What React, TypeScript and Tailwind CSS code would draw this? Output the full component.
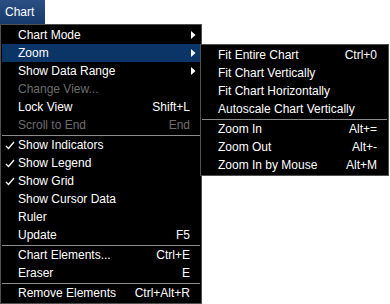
import React from "react";

type Item = {
  label?: string;
  shortcut?: string;
  sub?: boolean;
  disabled?: boolean;
  checked?: boolean;
  active?: boolean;
  sep?: boolean;
};

const mainItems: Item[] = [
  { label: "Chart Mode", sub: true },
  { label: "Zoom", sub: true, active: true },
  { label: "Show Data Range", sub: true },
  { label: "Change View...", disabled: true },
  { label: "Lock View", shortcut: "Shift+L" },
  { label: "Scroll to End", shortcut: "End", disabled: true },
  { sep: true },
  { label: "Show Indicators", checked: true },
  { label: "Show Legend", checked: true },
  { label: "Show Grid", checked: true },
  { label: "Show Cursor Data" },
  { label: "Ruler" },
  { label: "Update", shortcut: "F5" },
  { sep: true },
  { label: "Chart Elements...", shortcut: "Ctrl+E" },
  { label: "Eraser", shortcut: "E" },
  { sep: true },
  { label: "Remove Elements", shortcut: "Ctrl+Alt+R" },
];

const zoomItems: Item[] = [
  { label: "Fit Entire Chart", shortcut: "Ctrl+0" },
  { label: "Fit Chart Vertically" },
  { label: "Fit Chart Horizontally" },
  { label: "Autoscale Chart Vertically" },
  { sep: true },
  { label: "Zoom In", shortcut: "Alt+=" },
  { label: "Zoom Out", shortcut: "Alt+-" },
  { label: "Zoom In by Mouse", shortcut: "Alt+M" },
];

const Check = () => (
  <svg width="10" height="9" viewBox="0 0 10 9" className="absolute left-[3px] top-[5px]">
    <path d="M1 5 L3.5 7.5 L9 1" stroke="#fff" strokeWidth="1.3" fill="none" />
  </svg>
);

const Arrow = () => (
  <svg width="5" height="8" viewBox="0 0 5 8" className="absolute right-[4px] top-[5px]">
    <path d="M0 0 L4.5 4 L0 8 Z" fill="#fff" />
  </svg>
);

const Row = ({ item, textLeft, padRight }: { item: Item; textLeft: string; padRight: string }) => {
  if (item.sep) return <div className="mt-px h-px bg-[#8c8c8c]" />;
  return (
    <div
      className={`relative flex h-[18px] items-center justify-between ${textLeft} ${padRight} ${
        item.active ? "bg-[#0b3566]" : ""
      } ${item.disabled ? "text-[#6e6e6e]" : "text-white"}`}
    >
      {item.checked && <Check />}
      <span>{item.label}</span>
      {item.shortcut && <span>{item.shortcut}</span>}
      {item.sub && <Arrow />}
    </div>
  );
};

const App = () => {
  return (
    <div
      className="relative h-[304px] w-[390px] overflow-hidden bg-white text-[12px] leading-none"
      style={{ fontFamily: '"Liberation Sans", Arial, sans-serif' }}
    >
      <div className="flex h-[24px] w-[45px] items-center bg-gradient-to-b from-[#2b4f83] to-[#173a6b] pl-[5px] text-white">
        Chart
      </div>
      <div className="w-[202px] border border-[#4f4f4f] bg-black p-px">
        {mainItems.map((it, i) => (
          <Row key={i} item={it} textLeft="pl-[16px]" padRight="pr-[10px]" />
        ))}
      </div>
      <div className="absolute left-[200px] top-[44px] w-[189px] border border-[#4f4f4f] bg-black p-px">
        {zoomItems.map((it, i) => (
          <Row key={i} item={it} textLeft="pl-[16px]" padRight="pr-[10px]" />
        ))}
      </div>
    </div>
  );
};

export default App;
